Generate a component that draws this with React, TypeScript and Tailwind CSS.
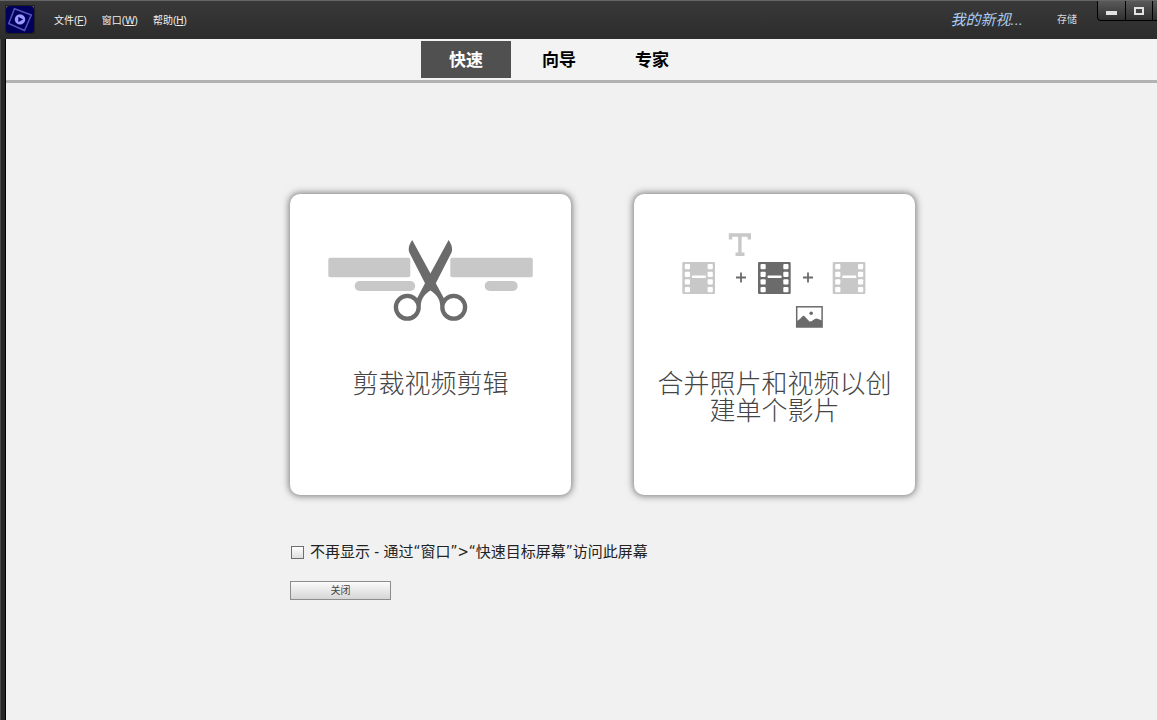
import { useState } from "react";

const uiFont =
  "font-['Liberation_Sans','Noto_Sans_CJK_SC',sans-serif]";

function AppLogo() {
  return (
    <svg width="30" height="30" viewBox="0 0 30 30" aria-hidden="true">
      <rect width="30" height="29" fill="#202020" />
      <rect x="1" y="1" width="28" height="14" fill="#555555" />
      <rect x="1" y="1" width="28" height="27" rx="4" fill="#00005b" />
      <path d="M9.500 3.700 26.300 10 19.500 25.500 3.700 18.500Z" fill="none" stroke="#5454bc" strokeWidth="1.500" />
      <circle cx="15" cy="14.400" r="5.200" fill="#9999ff" />
      <path d="M13.300 11.700 18.200 14.400 13.300 17.100Z" fill="#00005b" />
    </svg>
  );
}

function ScissorsArt() {
  return (
    <svg className="block w-full" viewBox="0 0 281 150" aria-hidden="true">
      <g fill="#c8c8c8">
        <rect x="38.300" y="63.700" width="82" height="19.500" rx="2" />
        <rect x="160.300" y="63.700" width="82.500" height="19.500" rx="2" />
        <rect x="64.700" y="87" width="60.500" height="10" rx="5" />
        <rect x="194.700" y="87" width="33" height="10" rx="5" />
      </g>
      <path
        d="M122.200 46 140.400 79.500 158.600 46Q163.500 53 161.500 58.500L145.800 89.300 154 104.500 150.300 112C150 104 145.500 100 140.400 96.500 135.300 100 131 104 130.700 112L127 104.500 135 89.300 119.300 58.500Q117.300 53 122.200 46Z"
        fill="#6b6b6b"
      />
      <g fill="#ffffff" stroke="#6b6b6b" strokeWidth="4.300">
        <circle cx="117.300" cy="113.300" r="11.400" />
        <circle cx="163.700" cy="113.300" r="11.400" />
      </g>
    </svg>
  );
}

const filmHoles = [2, 9.7, 17.2, 25];

function Film({ x, fill }: { x: number; fill: string }) {
  return (
    <g transform={`translate(${x} 68)`}>
      <rect width="32.700" height="32" rx="1" fill={fill} />
      <g fill="#ffffff">
        {filmHoles.map((y) => (
          <g key={y}>
            <rect x="2.500" y={y} width="5.200" height="5.200" rx="1" />
            <rect x="25.300" y={y} width="5.200" height="5.200" rx="1" />
          </g>
        ))}
        <rect x="9.500" y="13.500" width="14.200" height="2.500" rx="1" />
      </g>
    </g>
  );
}

function CombineArt() {
  return (
    <svg className="block w-full" viewBox="0 0 281 150" aria-hidden="true">
      <path d="M96.500 45.500V41H115.300V45.500M105.900 41V60M101.500 60.300H110.500" fill="none" stroke="#c8c8c8" strokeWidth="3.400" />
      <Film x={48.3} fill="#c8c8c8" />
      <Film x={124} fill="#6b6b6b" />
      <Film x={198.7} fill="#c8c8c8" />
      <path d="M102 83.500H112M107 78.500V88.500M169 83.500H179M174 78.500V88.500" stroke="#6b6b6b" strokeWidth="1.800" />
      <rect x="162.700" y="112.800" width="25.400" height="20.200" fill="#ffffff" stroke="#6b6b6b" strokeWidth="1.500" />
      <path d="M163 127Q167 124.500 168.500 122.300 169.400 121 171 122.800L175.500 127.500C178 128 179.500 125 182 124.500 184 124.500 186 126 188 126.500V133H163Z" fill="#6b6b6b" />
      <circle cx="177.200" cy="119.200" r="1.800" fill="#6b6b6b" />
    </svg>
  );
}

const menus = [
  { label: "文件", key: "F" },
  { label: "窗口", key: "W" },
  { label: "帮助", key: "H" },
];

const windowButton =
  "flex h-5 items-center justify-center border border-t-0 border-black bg-linear-to-b from-[#5a5a5a] to-[#303030]";

function TitleBar() {
  return (
    <header className="flex h-[39px] items-start overflow-hidden border-t border-[#666666] bg-linear-to-b from-[#393939] to-[#2c2c2c]">
      <div className="ml-[5px] mt-1 shrink-0">
        <AppLogo />
      </div>
      <nav className="ml-[19px] flex h-10 items-center gap-[15px] text-[10px] leading-4 text-[#f0f0f0]">
        {menus.map((m) => (
          <button key={m.key} type="button" className="whitespace-nowrap">
            {m.label}(<span className="underline">{m.key}</span>)
          </button>
        ))}
      </nav>
      <div className="ml-auto flex h-[38px] shrink-0 items-center gap-[34px] pr-5">
        <span className="text-[15px] italic leading-5 text-[#a9cbf0]">我的新视...</span>
        <button type="button" className="text-[10px] leading-4 text-[#d8d8d8]">
          存储
        </button>
      </div>
      <div className="flex w-[60px] shrink-0 overflow-hidden">
        <button type="button" aria-label="最小化" className={`${windowButton} w-[29px] shrink-0 rounded-bl-sm`}>
          <span className="mt-1 h-1 w-[11px] bg-[#e2e2e2]" />
        </button>
        <button type="button" aria-label="最大化" className={`${windowButton} -ml-px w-7 shrink-0`}>
          <span className="h-2 w-[10px] border-2 border-[#e2e2e2]" />
        </button>
        <button type="button" aria-label="关闭窗口" className={`${windowButton} -ml-px w-7 shrink-0`} />
      </div>
    </header>
  );
}

const tabs = ["快速", "向导", "专家"];

const cards = [
  { title: "剪裁视频剪辑", Art: ScissorsArt },
  { title: "合并照片和视频以创建单个影片", Art: CombineArt },
];

export default function App() {
  const [active, setActive] = useState("快速");
  const [hidden, setHidden] = useState(false);

  return (
    <div className={`flex min-h-screen flex-col bg-[#f1f1f1] ${uiFont}`}>
      <TitleBar />
      <div className="flex flex-1">
        <div className="w-[6px] shrink-0 border-l border-r border-l-[#4a4a4a] border-r-black bg-[#272727]" />
        <div className="min-w-0 flex-1">
          <div
            role="tablist"
            className="flex h-11 justify-center gap-[3px] border-b-3 border-[#b2b2b2] bg-[#f3f3f3] pr-[45px] pt-[2px]"
          >
            {tabs.map((t) => (
              <button
                key={t}
                type="button"
                role="tab"
                aria-selected={t === active}
                onClick={() => setActive(t)}
                className={`h-[37px] w-[90px] pt-[2px] text-[17px] font-bold leading-6 ${
                  t === active ? "bg-[#505050] text-white" : "text-black"
                }`}
              >
                {t}
              </button>
            ))}
          </div>
          <main className="flex justify-center pl-[42px] pt-[111px]">
            <div>
              <div className="flex gap-[63px]">
                {cards.map(({ title, Art }) => (
                  <button
                    key={title}
                    type="button"
                    className="flex h-[301px] w-[281px] flex-col rounded-[10px] bg-white shadow-[0_0_7px_1px_rgba(0,0,0,0.5)]"
                  >
                    <Art />
                    <span className="mt-[27px] w-full px-5 text-center text-[26px] font-light leading-[27px] text-[#444444]">
                      {title}
                    </span>
                  </button>
                ))}
              </div>
              <label className="mt-[47px] flex w-fit items-center gap-[6px] pl-px font-['DejaVu_Sans_Condensed','Noto_Sans_CJK_SC',sans-serif] text-[15px] leading-5 text-[#222222]">
                <input
                  type="checkbox"
                  checked={hidden}
                  onChange={(e) => setHidden(e.target.checked)}
                  className="size-[13px] appearance-none border border-[#6f6f6f] bg-linear-to-b from-white to-[#dedede] checked:bg-[#505050] checked:bg-none"
                />
                不再显示 - 通过“窗口”&gt;“快速目标屏幕”访问此屏幕
              </label>
              <button
                type="button"
                className="mt-[19px] block h-[19px] w-[101px] border border-[#8c8c8c] bg-linear-to-b from-[#fbfbfb] to-[#d6d6d6] text-[10px] leading-4 text-[#444444]"
              >
                关闭
              </button>
            </div>
          </main>
        </div>
      </div>
    </div>
  );
}
